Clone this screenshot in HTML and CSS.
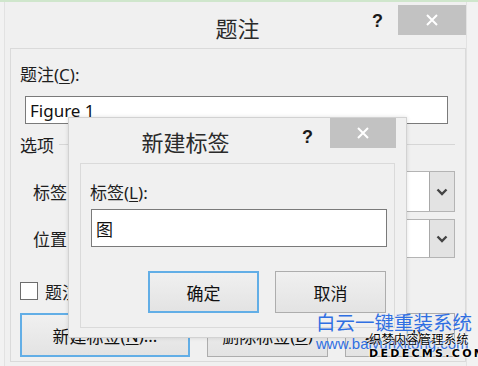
FILE: index.html
```html
<!DOCTYPE html>
<html lang="zh-CN">
<head>
    <meta charset="UTF-8">
    <title>题注</title>
    <link rel="stylesheet" href="styles.css">
</head>
<body>
    <div class="top-line"></div>
    <div class="window">
        <div class="titlebar">
            <div class="title">题注</div>
            <div class="help">?</div>
            <div class="close">
                <svg width="14" height="14" viewBox="0 0 14 14"><path d="M2 2 L12 12 M12 2 L2 12" stroke="#fff" stroke-width="2"/></svg>
            </div>
        </div>
        <div class="panel">
            <div class="label first">题注(<u>C</u>):</div>
            <div class="textbox caption-box">Figure 1</div>
            <div class="group-row">
                <span>选项</span>
                <span class="group-line"></span>
            </div>
            <div class="field-row row-label">
                <span class="field-name">标签</span>
                <div class="dropdown">
                    <span class="drop-text"></span>
                    <span class="drop-arrow">
                        <svg width="12" height="8" viewBox="0 0 12 8"><path d="M1.5 1.5 L6 6 L10.5 1.5" fill="none" stroke="#444" stroke-width="2.4"/></svg>
                    </span>
                </div>
            </div>
            <div class="field-row row-pos">
                <span class="field-name">位置</span>
                <div class="dropdown">
                    <span class="drop-text"></span>
                    <span class="drop-arrow">
                        <svg width="12" height="8" viewBox="0 0 12 8"><path d="M1.5 1.5 L6 6 L10.5 1.5" fill="none" stroke="#444" stroke-width="2.4"/></svg>
                    </span>
                </div>
            </div>
            <div class="check-row">
                <span class="checkbox"></span>
                <span>题注中不包含标签(<u>E</u>)</span>
            </div>
            <div class="button-row">
                <div class="btn btn-focus btn-new">新建标签(<u>N</u>)...</div>
                <div class="btn btn-del">删除标签(<u>D</u>)</div>
                <div class="btn btn-num">编号(<u>U</u>)...</div>
            </div>
        </div>
    </div>

    <!-- 新建标签 弹窗 -->
    <div class="dialog">
        <div class="dialog-titlebar">
            <div class="dialog-title">新建标签</div>
            <div class="help">?</div>
            <div class="close dialog-close">
                <svg width="14" height="14" viewBox="0 0 14 14"><path d="M2 2 L12 12 M12 2 L2 12" stroke="#fff" stroke-width="2"/></svg>
            </div>
        </div>
        <div class="dialog-panel">
            <div class="label dialog-label">标签(<u>L</u>):</div>
            <div class="textbox tag-box">图</div>
            <div class="dialog-buttons">
                <div class="btn btn-focus dlg-btn">确定</div>
                <div class="btn dlg-btn">取消</div>
            </div>
        </div>
    </div>

    <div class="watermark">
        <div class="wm-title">白云一键重装系统</div>
        <div class="wm-url">www.baiyunxitong.com</div>
        <div class="wm-dede">
            <div class="wm-cn">织梦内容管理系统</div>
            <div class="wm-en">DEDECMS.COM</div>
        </div>
    </div>
</body>
</html>
```

FILE: styles.css
```css
* {
    margin: 0;
    padding: 0;
    box-sizing: border-box;
}

body {
    width: 478px;
    height: 366px;
    overflow: hidden;
    background-color: #f2f2f2;
    font-family: "Noto Sans", "Noto Sans CJK SC", sans-serif;
    font-size: 17px;
    color: #1e1e1e;
    position: relative;
}

u {
    text-decoration: underline;
    text-underline-offset: 2px;
}

.top-line {
    height: 2px;
    background-color: #cfe6cc;
}

.window {
    margin-left: 4px;
    width: 463px;
    height: 364px;
    border-left: 1px solid #e2e2e2;
    border-right: 1px solid #e2e2e2;
    background-color: #f0f0f0;
}

.titlebar {
    height: 46px;
    display: flex;
    align-items: flex-start;
}

.title {
    flex: 1;
    padding-left: 98px;
    text-align: center;
    font-size: 22px;
    line-height: 24px;
    margin-top: 14px;
    color: #2a2a2a;
}

.help {
    font-family: "Liberation Sans", Arial, sans-serif;
    font-weight: bold;
    font-size: 18px;
    line-height: 18px;
    color: #1a1a1a;
    margin-top: 10px;
    width: 10px;
    margin-right: 16px;
}

.close {
    width: 68px;
    height: 30px;
    margin-top: 3px;
    background-color: #c2c2c2;
    display: flex;
    align-items: center;
    justify-content: center;
}

.panel {
    margin-left: 5px;
    height: 314px;
    border: 1px solid #dadada;
    padding: 0 10px 0 9px;
}

.label {
    line-height: 22px;
}

.first {
    margin-top: 15px;
}

.textbox {
    background: #fff;
    border: 1px solid #7a7a7a;
    padding-left: 4px;
    display: flex;
    align-items: center;
    color: #111;
}

.caption-box {
    margin-top: 10px;
    margin-left: 5px;
    width: 423px;
    height: 28px;
}

.group-row {
    margin-top: 9px;
    height: 22px;
    display: flex;
    align-items: center;
}

.group-line {
    flex: 1;
    height: 1px;
    margin-left: 5px;
    background-color: #d6d6d6;
}

.field-row {
    display: flex;
    align-items: center;
}

.row-label {
    margin-top: 16px;
    height: 41px;
}

.row-pos {
    margin-top: 7px;
    height: 39px;
}

.field-name {
    margin-left: 13px;
}

.dropdown {
    margin-left: auto;
    width: 345px;
    height: 100%;
    display: flex;
    border: 1px solid #b4b4b4;
    background: #fff;
}

.drop-text {
    flex: 1;
}

.drop-arrow {
    width: 25px;
    background-color: #e3e3e3;
    border-left: 1px solid #a8a8a8;
    display: flex;
    align-items: center;
    justify-content: center;
}

.check-row {
    margin-top: 24px;
    height: 18px;
    display: flex;
    align-items: center;
}

.checkbox {
    width: 18px;
    height: 18px;
    border: 1px solid #6d6d6d;
    background: #fff;
    margin-right: 7px;
}

.button-row {
    margin-top: 13px;
    height: 44px;
    display: flex;
    gap: 17px;
}

.btn {
    height: 100%;
    border: 1px solid #adadad;
    background: linear-gradient(#f0f0f0, #e3e3e3);
    display: flex;
    align-items: center;
    justify-content: center;
    color: #111;
}

.btn-focus {
    border: 2px solid #62aee6;
}

.btn-new {
    width: 170px;
}

.btn-del {
    width: 121px;
}

.btn-num {
    width: 110px;
}

/* 新建标签 弹窗 */
.dialog {
    position: absolute;
    left: 68px;
    top: 117px;
    width: 339px;
    height: 221px;
    background-color: #f0f0f0;
    border: 1px solid #d2d2d2;
    box-shadow: 0 0 4px rgba(0, 0, 0, 0.12);
    padding: 0 11px 0 11px;
}

.dialog-titlebar {
    height: 45px;
    display: flex;
    align-items: flex-start;
    margin-right: -1px;
}

.dialog-title {
    flex: 1;
    text-align: center;
    font-size: 22px;
    line-height: 24px;
    margin-top: 12px;
    padding-right: 11px;
    color: #2a2a2a;
}

.dialog-titlebar .help {
    margin-top: 10px;
    margin-right: 18px;
}

.dialog-close {
    margin-top: 0;
    width: 66px;
}

.dialog-panel {
    height: 165px;
    border: 1px solid #dadada;
    padding: 0 8px 0 9px;
}

.dialog-label {
    margin-top: 18px;
}

.tag-box {
    margin-top: 5px;
    margin-left: 1px;
    width: 296px;
    height: 38px;
}

.dialog-buttons {
    margin-top: 24px;
    height: 42px;
    display: flex;
    justify-content: flex-end;
    gap: 16px;
}

.dlg-btn {
    width: 111px;
}

/* 水印 */
.watermark {
    position: absolute;
    left: 316px;
    top: 312px;
    width: 160px;
}

.wm-title {
    font-size: 19.5px;
    line-height: 21px;
    color: #2f6fe2;
    white-space: nowrap;
}

.wm-url {
    font-family: "Liberation Sans", Arial, sans-serif;
    font-size: 15px;
    line-height: 17px;
    margin-top: 2px;
    color: #2f6fe2;
}

.wm-dede {
    position: absolute;
    left: 53px;
    top: 21px;
    text-shadow: 0 0 2px #fff, 0 0 2px #fff, 0 0 1px #fff;
    color: #000;
}

.wm-cn {
    font-size: 12px;
    line-height: 14px;
    letter-spacing: 0.5px;
}

.wm-en {
    font-family: "DejaVu Sans", sans-serif;
    font-weight: bold;
    font-size: 11px;
    line-height: 14px;
    letter-spacing: 2.3px;
}
```
